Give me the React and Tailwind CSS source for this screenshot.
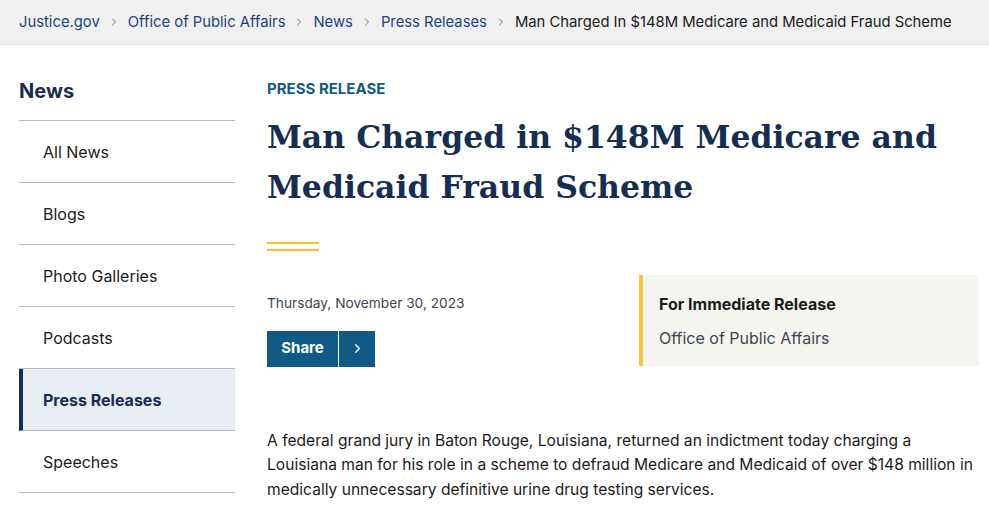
import { ChevronRight } from 'lucide-react'

const crumbs = ['Justice.gov', 'Office of Public Affairs', 'News', 'Press Releases']

const navItems = [
  { label: 'All News' },
  { label: 'Blogs' },
  { label: 'Photo Galleries' },
  { label: 'Podcasts' },
  { label: 'Press Releases', active: true },
  { label: 'Speeches' },
]

function Breadcrumbs() {
  return (
    <div className="h-[45px] bg-[#f0f0f0] border-b border-[#dfe1e2] flex items-center px-[19px] text-[14.8px]">
      {crumbs.map((c) => (
        <span key={c} className="flex items-center">
          <a className="text-[#1a4480]">{c}</a>
          <ChevronRight className="w-[12px] h-[12px] mx-[8px] text-[#71767a]" strokeWidth={2} />
        </span>
      ))}
      <span className="text-[#1b1b1b]">Man Charged In $148M Medicare and Medicaid Fraud Scheme</span>
    </div>
  )
}

function Sidebar() {
  return (
    <aside className="w-[216px] shrink-0">
      <h2 className="text-[20px] font-bold text-[#162e51] h-[75px] pt-[36px] leading-none">News</h2>
      <ul className="border-t border-[#b9bbbd]">
        {navItems.map((item) => (
          <li
            key={item.label}
            className={`h-[62px] flex items-center border-b border-[#b9bbbd] text-[16px] ${
              item.active
                ? 'bg-[#e8edf4] border-l-4 border-l-[#162e51] pl-[20px] font-bold text-[#162e51]'
                : 'pl-[24px] text-[#1b1b1b]'
            }`}
          >
            {item.label}
          </li>
        ))}
      </ul>
    </aside>
  )
}

function Article() {
  return (
    <main className="flex-1 pl-[32px] pr-[10px]">
      <div className="pt-[36px] text-[15px] font-bold text-[#0f5b86] leading-none">PRESS RELEASE</div>
      <h1
        className="mt-[16px] text-[31.5px] leading-[50px] font-bold text-[#162e51]"
        style={{ fontFamily: '"DejaVu Serif", serif' }}
      >
        Man Charged in $148M Medicare and Medicaid Fraud Scheme
      </h1>
      <div className="mt-[30px] w-[52px] flex flex-col gap-[5px]">
        <div className="h-[2px] bg-[#fbbd2f]" />
        <div className="h-[2px] bg-[#fbbd2f]" />
      </div>
      <div className="mt-[24px] flex justify-between">
        <div className="pt-[22px]">
          <div className="text-[13.7px] text-[#3d4551] leading-none">Thursday, November 30, 2023</div>
          <button className="mt-[20px] h-[36px] w-[108px] bg-[#0f5b86] text-white flex items-stretch">
            <span className="flex-1 flex items-center justify-center font-bold text-[15px] border-r border-white">Share</span>
            <span className="w-[36px] flex items-center justify-center">
              <ChevronRight className="w-[15px] h-[15px]" strokeWidth={2} />
            </span>
          </button>
        </div>
        <div className="w-[340px] h-[91px] bg-[#f5f5f0] border-l-4 border-[#f9c642] pl-[16px] pt-[21px]">
          <div className="text-[16px] font-bold text-[#1b1b1b] leading-none">For Immediate Release</div>
          <div className="mt-[18px] text-[16px] text-[#3d4551] leading-none">Office of Public Affairs</div>
        </div>
      </div>
      <p className="mt-[62px] text-[15.6px] leading-[24.5px] text-[#1b1b1b]">
        A federal grand jury in Baton Rouge, Louisiana, returned an indictment today charging a Louisiana man for his
        role in a scheme to defraud Medicare and Medicaid of over $148 million in medically unnecessary definitive urine
        drug testing services.
      </p>
    </main>
  )
}

export default function App() {
  return (
    <div className="w-[989px] h-[506px] overflow-hidden bg-white" style={{ fontFamily: 'Inter, sans-serif' }}>
      <Breadcrumbs />
      <div className="flex pl-[19px]">
        <Sidebar />
        <Article />
      </div>
    </div>
  )
}
